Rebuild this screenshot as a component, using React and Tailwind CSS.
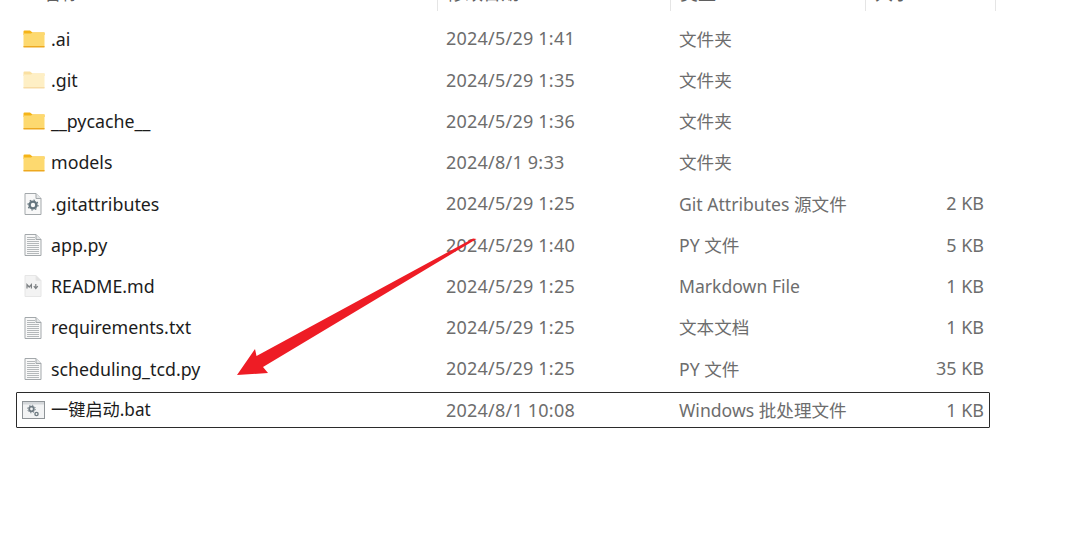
const files = [
  { name: '.ai', date: '2024/5/29 1:41', type: '文件夹', size: '', icon: 'folder' },
  { name: '.git', date: '2024/5/29 1:35', type: '文件夹', size: '', icon: 'hidden' },
  { name: '__pycache__', date: '2024/5/29 1:36', type: '文件夹', size: '', icon: 'folder' },
  { name: 'models', date: '2024/8/1 9:33', type: '文件夹', size: '', icon: 'folder' },
  { name: '.gitattributes', date: '2024/5/29 1:25', type: 'Git Attributes 源文件', size: '2 KB', icon: 'gear' },
  { name: 'app.py', date: '2024/5/29 1:40', type: 'PY 文件', size: '5 KB', icon: 'doc' },
  { name: 'README.md', date: '2024/5/29 1:25', type: 'Markdown File', size: '1 KB', icon: 'md' },
  { name: 'requirements.txt', date: '2024/5/29 1:25', type: '文本文档', size: '1 KB', icon: 'doc' },
  { name: 'scheduling_tcd.py', date: '2024/5/29 1:25', type: 'PY 文件', size: '35 KB', icon: 'doc' },
  { name: '一键启动.bat', date: '2024/8/1 10:08', type: 'Windows 批处理文件', size: '1 KB', icon: 'bat', selected: true },
];

function Folder({ faded }) {
  return (
    <svg width="22" height="18" viewBox="0 0 22 18" className={faded ? 'opacity-40' : ''}>
      <path d="M0.5 1.5 Q0.5 0.5 1.5 0.5 H7 L9.5 2.5 H21.5 V5 H0.5 Z" fill="#f5b418" />
      <path d="M0.5 3.5 H8 L9.5 2.5 H21.5 V17 H0.5 Z" fill="#fdd96f" />
      <path d="M0.5 16 H21.5 V17.5 H0.5 Z" fill="#eda820" />
    </svg>
  );
}

function Page({ children }) {
  return (
    <svg width="18" height="22" viewBox="0 0 18 22" className="-ml-[2px]">
      <path d="M1 .5 H12 L17 5.5 V21.5 H1 Z" fill="#f8f8f8" stroke="#a3a8ab" />
      <path d="M12 .5 V5.5 H17" fill="#e4e6e7" stroke="#a3a8ab" />
      {children}
    </svg>
  );
}

function DocIcon() {
  return (
    <Page>
      {[3, 5, 7, 9, 11, 13, 15, 17, 19].map((y) => (
        <path key={y} d={`M3 ${y + 0.5} H${y < 6 ? 11 : 15}`} stroke="#b4b8ba" />
      ))}
    </Page>
  );
}

function GearDoc() {
  return (
    <Page>
      <circle cx="9" cy="12" r="3.4" fill="none" stroke="#65757e" strokeWidth="2.4" />
      <circle cx="9" cy="12" r="5" fill="none" stroke="#65757e" strokeWidth="1.2" strokeDasharray="1.6 2.3" />
    </Page>
  );
}

function MdIcon() {
  return (
    <svg width="18" height="22" viewBox="0 0 18 22" className="-ml-[2px]">
      <path d="M1 .5 H12 L17 5.5 V21.5 H1 Z" fill="#f3f3f3" stroke="#e6e6e6" />
      <path d="M12 .5 V5.5 H17" fill="#e2e2e2" stroke="#e6e6e6" />
      <path d="M3 13.5 V9.5 L5.2 12 L7.4 9.5 V13.5 M11.8 9 V13 M9.8 11.2 L11.8 13.5 L13.8 11.2" fill="none" stroke="#7d8184" strokeWidth="1.2" />
    </svg>
  );
}

function BatIcon() {
  return (
    <svg width="23" height="18" viewBox="0 0 23 18" className="-ml-[1px]">
      <rect x=".5" y=".5" width="22" height="17" fill="#f2f3f4" stroke="#8f9498" />
      <rect x="1" y="1" width="21" height="2.5" fill="#d4d7da" />
      <circle cx="9.5" cy="8" r="2.3" fill="none" stroke="#6f7b83" strokeWidth="1.8" />
      <circle cx="9.5" cy="8" r="3.8" fill="none" stroke="#6f7b83" strokeWidth="1" strokeDasharray="1.3 1.7" />
      <circle cx="14.5" cy="13" r="1.6" fill="none" stroke="#6f7b83" strokeWidth="1.4" />
    </svg>
  );
}

function FileIcon({ kind }) {
  if (kind === 'folder') return <Folder />;
  if (kind === 'hidden') return <Folder faded />;
  if (kind === 'gear') return <GearDoc />;
  if (kind === 'md') return <MdIcon />;
  if (kind === 'bat') return <BatIcon />;
  return <DocIcon />;
}

function Row({ file }) {
  return (
    <div
      className={`flex items-center h-[35.5px] ml-[16px] w-[974px] rounded-[1px] border ${
        file.selected ? 'border-[#2b2b2b]' : 'border-transparent'
      }`}
    >
      <div className="w-[34px] flex justify-center shrink-0">
        <FileIcon kind={file.icon} />
      </div>
      <div
        className={`w-[395px] shrink-0 text-[#1c1c1c] whitespace-nowrap ${
          file.selected ? 'text-[17.2px]' : 'text-[17.8px]'
        }`}
      >
        {file.name}
      </div>
      <div className="w-[233px] shrink-0 text-[#6d6d6d] tracking-[0.22px] whitespace-nowrap">{file.date}</div>
      <div className="w-[240px] shrink-0 text-[#6d6d6d] text-[17.6px] whitespace-nowrap">{file.type}</div>
      <div className="w-[65px] shrink-0 text-right text-[#6d6d6d] whitespace-nowrap">{file.size}</div>
    </div>
  );
}

export default function App() {
  return (
    <div className="relative w-[1080px] h-[557px] bg-white overflow-hidden text-[18px] font-['Noto_Sans','Noto_Sans_CJK_SC',sans-serif]">
      <div className="flex h-[11px] overflow-hidden text-[#5f5f5f]">
        <div className="w-[437px] pl-[43px]">
          <div className="-mt-[20px]">名称</div>
        </div>
        <div className="w-[233px] pl-[9px] border-l border-[#e5e5e5]">
          <div className="-mt-[20px]">修改日期</div>
        </div>
        <div className="w-[195px] pl-[9px] border-l border-[#e5e5e5]">
          <div className="-mt-[20px]">类型</div>
        </div>
        <div className="w-[130px] pl-[9px] border-l border-[#e5e5e5]">
          <div className="-mt-[20px]">大小</div>
        </div>
        <div className="w-px border-l border-[#e5e5e5]" />
      </div>
      <div className="flex flex-col gap-[5.75px] pt-[10.2px]">
        {files.map((f) => (
          <Row key={f.name} file={f} />
        ))}
      </div>
      <svg className="absolute left-0 top-0 pointer-events-none" width="1080" height="557" viewBox="0 0 1080 557">
        <path d="M476.5 239 L263 367 L268 373 L237 375 L255 349 L256.5 356 L473 238.5 Z" fill="#ee1c25" />
      </svg>
    </div>
  );
}
